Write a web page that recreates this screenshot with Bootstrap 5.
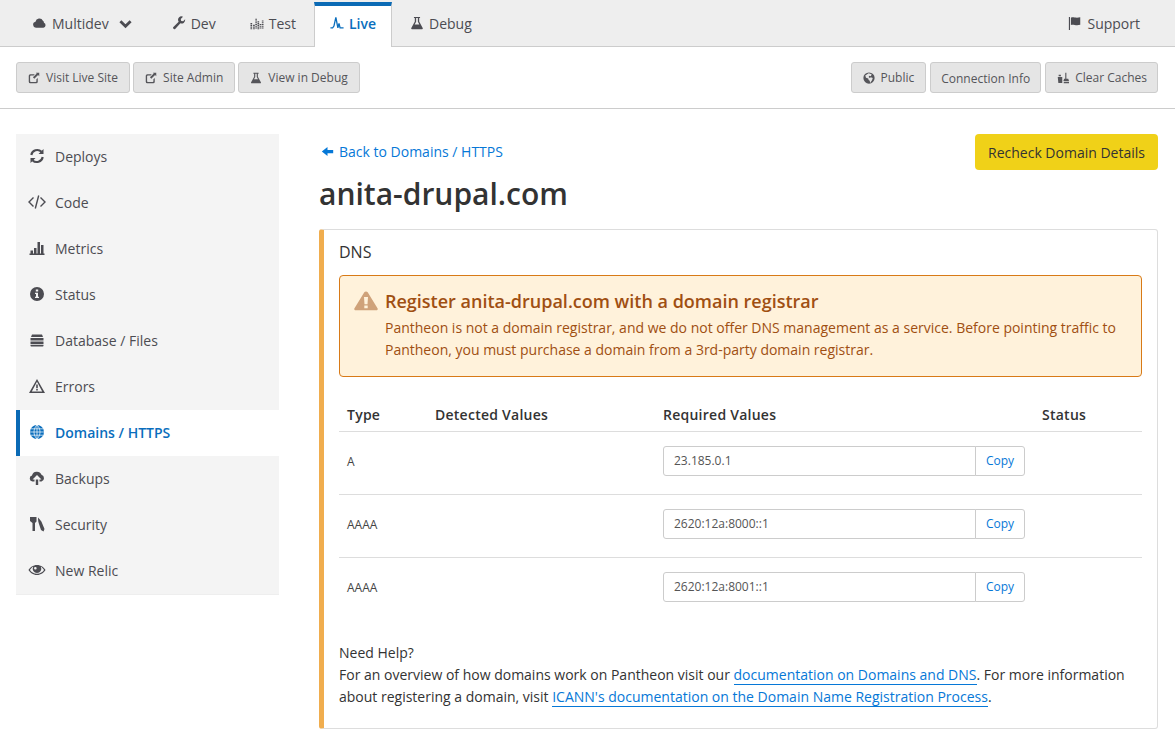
<!DOCTYPE html>
<html lang="en">
<head>
    <meta charset="UTF-8">
    <title>anita-drupal.com - Domains / HTTPS</title>
    <link href="https://cdn.jsdelivr.net/npm/bootstrap@5.3.2/dist/css/bootstrap.min.css" rel="stylesheet">
    <style>
        body {
            font-family: "Open Sans", "Liberation Sans", sans-serif;
            font-size: 14px;
            color: #333;
            background: #fff;
        }
        .ico { width: 16px; height: 16px; fill: currentColor; flex: none; }
        a { color: #0678d7; text-decoration: none; }

        /* top tabs */
        .env-bar { background: #eee; height: 47px; border-bottom: 1px solid #ccc; padding: 2px 17px 0 16px; }
        .env-tab { display: flex; align-items: center; gap: 5px; height: 45px; padding: 0 16px 3px; margin-right: 2px; color: #4c4c52; }
        .env-tab .ico { width: 14px; height: 14px; }
        .env-tab .ico.cloud { width: 15px; }
        .env-tab.current { background: #fff; border: solid #ccc; border-width: 0 1px; border-top: 4px solid #0a6ab5; padding: 0 15px 7px; color: #0a6ebd; font-weight: 600; }
        .env-tab .ico.caret { width: 13px; height: 13px; margin: 0 6px 0 5px; }

        /* toolbar */
        .tool-bar { height: 62px; border-bottom: 1px solid #ccc; padding: 15px 17px 0 16px; }
        .tool-btn { display: flex; align-items: center; gap: 6px; height: 31px; padding: 0 11px; font-size: 12px; color: #55555a; background: #e5e5e5; border: 1px solid #ccc; border-radius: 3px; }
        .tool-btn .ico { width: 12px; height: 12px; }
        .tool-btn.plain { padding: 2px 10px 0; }
        .tool-btn.tight { padding-right: 10px; }
        .tool-left { gap: 3px; }
        .tool-right { gap: 4px; }

        /* side menu */
        .page-wrap { padding: 25px 17px 0 16px; gap: 40px; }
        .side-menu { width: 263px; flex: none; background: #f4f4f4; border-bottom: 1px solid #eee; border-radius: 0; align-self: flex-start; }
        .side-menu .list-group-item { display: flex; align-items: center; gap: 10px; height: 46px; margin-top: 0; padding: 0 0 2px 13px; background: transparent; border: 0; border-radius: 0; color: #4c4c52; font-size: 14px; }
        .side-menu .list-group-item.active { margin-top: 0; background: #fff; border: 0; border-left: 4px solid #0a6ab5; padding-left: 9px; color: #0a6ebd; font-weight: 600; }
        .side-menu .ico.wide { width: 18px; margin: 0 -1px 0 -1px; }

        /* main */
        .main-col { flex: 1; min-width: 0; }
        .back-link { gap: 5px; margin-left: 2px; padding-bottom: 2px; }
        .back-link .ico { width: 13px; height: 13px; }
        .recheck { width: 183px; height: 36px; padding: 0; background: #f0d118; border: 0; border-radius: 4px; color: #333; font-size: 14px; }
        .domain-title { font-size: 30px; font-weight: 600; line-height: 40px; margin: 4px 0 15px; color: #333; }
        .dns-panel { border: 1px solid #ddd; border-left: 5px solid #f0ad4e; border-radius: 3px; padding: 11px 15px 21px; height: 500px; }
        .dns-title { font-size: 16px; line-height: 22px; margin: 0 0 12px; font-weight: 400; }
        .reg-alert { display: flex; gap: 7px; margin: 0 0 27px; height: 102px; padding: 13px 14px 0; background: #fff2db; border: 1px solid #d87a17; border-radius: 4px; color: #a04f12; font-size: 14px; line-height: 22px; }
        .reg-alert .ico { width: 24px; height: 20px; margin-top: 2px; color: #cfa27a; }
        .reg-alert h5 { font-size: 18px; font-weight: 600; line-height: 24px; margin: 0 0 4px; color: #a04f12; }
        .dns-table { table-layout: fixed; width: 100%; margin-bottom: 22px; font-size: 12px; color: #333; }
        .dns-table th { font-size: 14px; font-weight: 600; letter-spacing: .25px; padding: 0 8px 5px; height: 27px; border-bottom: 1px solid #ddd; }
        .dns-table td { padding: 14px 8px 0; height: 63px; vertical-align: top; border-bottom: 1px solid #ddd; }
        .dns-table tr:last-child td { border-bottom: 0; }
        .dns-table td.rtype { padding-top: 21px; color: #444; }
        .val-group { width: 362px; }
        .val-group .form-control { height: 30px; padding: 0 10px; font-size: 12px; color: #555; border-color: #ccc; border-radius: 3px 0 0 3px; background: #fff; min-height: 0; }
        .val-group .btn { width: 50px; height: 30px; padding: 0; font-size: 12px; color: #0678d7; background: #fff; border: 1px solid #ccc; border-radius: 0 3px 3px 0; }
        .help-text { line-height: 22px; }
        .help-text a { border-bottom: 1px solid #0678d7; }
    </style>
</head>
<body>
    <svg class="d-none">
        <symbol id="i-cloud" viewBox="0 0 16 16"><path d="M4 13.500a3.500 3.500 0 0 1-.6-6.900A4.500 4.500 0 0 1 11.900 5.500a2.600 2.600 0 0 1 1.200 2.300A3 3 0 0 1 12.500 13.500z"/></symbol>
        <symbol id="i-chevron" viewBox="0 0 14 14"><path d="M1.500 4.500 7 10l5.500-5.500" fill="none" stroke="currentColor" stroke-width="3"/></symbol>
        <symbol id="i-wrench" viewBox="0 0 16 16"><path d="M15 4.500a4 4 0 0 1-5.400 3.900l-5.700 6.100a1.500 1.500 0 0 1-2.300-2l6-5.900A4 4 0 0 1 12.600.8L10 3.300l.5 2.300 2.300.5L15 3.600z"/></symbol>
        <symbol id="i-test" viewBox="0 0 16 16"><path d="M1.500 8v7M4.500 10v5M7 3v12M9.500 6v9M12 9v6M14.500 5v10" stroke="currentColor" stroke-width="1.900" stroke-dasharray="1.300 .7" fill="none"/></symbol>
        <symbol id="i-pulse" viewBox="0 0 16 16"><path d="M.5 13.500H3l1.500-2 2.200-10L9 13.500l1.300-5 1.200 5h4" fill="none" stroke="currentColor" stroke-width="1.500"/></symbol>
        <symbol id="i-flask" viewBox="0 0 16 16"><path fill-rule="evenodd" d="M4.500 1h7v1.400h-1v3.800l4 7.400a1 1 0 0 1-.9 1.400H2.400a1 1 0 0 1-.9-1.400l4-7.400V2.400h-1zM7 2.400v4.200L5.300 9.600h5.400L9 6.600V2.400z"/></symbol>
        <symbol id="i-flag" viewBox="0 0 16 16"><path d="M1 1h1.300v15H1zM3.300 2c3-1.400 5 1 10.700-.5v8.500c-5.500 1.500-7.700-1-10.700.4z"/></symbol>
        <symbol id="i-share" viewBox="0 0 16 16"><path d="M3 3h6L7.500 4.800H3.800a1 1 0 0 0-1 1v6.400a1 1 0 0 0 1 1h6.400a1 1 0 0 0 1-1V9.500L13 8v5a2 2 0 0 1-2 2H3a2 2 0 0 1-2-2V5a2 2 0 0 1 2-2z"/><path d="M10.500 1H15v4.500l-1.600-1.600-5 5-1.800-1.800 5-5z"/></symbol>
        <symbol id="i-world" viewBox="0 0 16 16"><path fill-rule="evenodd" d="M8 .5a7.500 7.500 0 1 1 0 15 7.500 7.500 0 0 1 0-15zM3 4.500l1 3 3 1 .5 2 1.500 1 .5 3 2.500-3.500 1-3-2.500-1-1.500 1-1.500-1.500 1-1.500 2 .5 1-2.500L7.500 1.500z"/></symbol>
        <symbol id="i-clean" viewBox="0 0 16 16"><path d="M1 6.500h6v8H1.800zM2.200 3.500h3v2.200h-3zM11 1h1.500v8H15l1 3H8.500l1-3H11zM9 13h7v2H9z"/></symbol>
        <symbol id="i-refresh" viewBox="0 0 16 16"><path d="M2.300 7A6 6 0 0 1 12.500 3.800M13.700 9A6 6 0 0 1 3.500 12.200" fill="none" stroke="currentColor" stroke-width="2.100"/><path d="M14.500 1v5h-5zM1.500 15v-5h5z"/></symbol>
        <symbol id="i-code" viewBox="0 0 18 16"><path d="M5.500 3.500 1 8l4.500 4.500M12.500 3.500 17 8l-4.500 4.500M10.700 1.500l-3.400 13" fill="none" stroke="currentColor" stroke-width="1.400"/></symbol>
        <symbol id="i-bars" viewBox="0 0 16 16"><path d="M.5 13.500h15V15H.5zM1.500 10.500h2.500v3H1.500zM5 8h2.500v5.500H5zM8.500 2h2.500v11.500H8.500zM12 5h2.500v8.500H12z"/></symbol>
        <symbol id="i-info" viewBox="0 0 16 16"><path fill-rule="evenodd" d="M8 1a7 7 0 1 1 0 14A7 7 0 0 1 8 1zM6.800 3.500v2h2.400v-2zM6 6.800V8h1v2.700H6V12h4v-1.300H9V6.800z"/></symbol>
        <symbol id="i-db" viewBox="0 0 16 16"><path d="M3 2.500h10l1 2.500H2zM1.500 6h13v2.500h-13zM1.500 9.500h13V12h-13zM1.500 12.800h13v1a.8.8 0 0 1-.8.8H2.300a.8.8 0 0 1-.8-.8z"/></symbol>
        <symbol id="i-warn" viewBox="0 0 16 16"><path fill-rule="evenodd" d="M8 1 16 15H0zM8 3.800 2.800 13.500h10.400zM7.200 6.500h1.600v3.800H7.200zM7.200 11h1.600v1.500H7.200z"/></symbol>
        <symbol id="i-globe" viewBox="0 0 16 16"><circle cx="8" cy="8" r="7"/><path d="M1 8h14M2 4.800h12M2 11.200h12M8 1v14M8 1c-4 3.500-4 10.500 0 14M8 1c4 3.500 4 10.500 0 14" fill="none" stroke="#fff" stroke-width=".7"/></symbol>
        <symbol id="i-backup" viewBox="0 0 16 16"><path d="M3.500 11.500a3 3 0 0 1-.5-5.900A5 5 0 0 1 12.500 4.800 3.500 3.500 0 0 1 12.500 11.500H10.500V9.500H12.500L8 5 3.500 9.500h2v2zM6.800 9.500h2.400V15H6.800z"/></symbol>
        <symbol id="i-keys" viewBox="0 0 16 16"><path d="M1 1h6.500v4.500L6 7v8H3.500V7L1 5zM9 1.500c0 3.500 .5 5 1 6.500l2 6 2.500 1.500L15.500 13 13 7c-.5-1.500-1.500-3-4-5.500z"/></symbol>
        <symbol id="i-eye" viewBox="0 0 18 16"><path fill-rule="evenodd" d="M9 3c4 0 7 2.600 8.500 5C16 10.400 13 13 9 13S2 10.400.5 8C2 5.600 5 3 9 3zM5.200 4.800C3.800 5.500 2.800 6.700 2 8c1.200 1.900 3.600 3.800 7 3.800S14.800 9.900 16 8c-.8-1.300-1.800-2.500-3.200-3.200a4.300 4.300 0 1 1-7.600 0zM7.300 5a1.300 1.300 0 1 0 .1 2.600A1.300 1.300 0 0 0 7.300 5z"/></symbol>
        <symbol id="i-back" viewBox="0 0 16 16"><path d="M8 2.500v3.500h7v4H8v3.500L1 8z"/></symbol>
        <symbol id="i-alert" viewBox="0 0 24 22" preserveAspectRatio="none"><path fill-rule="evenodd" d="M10.300 1.500a2 2 0 0 1 3.400 0l9.800 17.500a1.500 1.500 0 0 1-1.300 2.300H1.800A1.500 1.500 0 0 1 .5 19zM10 6.500l.5 8h3l.5-8zM10.300 16v3h3.400v-3z"/></symbol>
    </svg>

    <nav class="nav env-bar">
        <a class="env-tab" href="#"><svg class="ico cloud"><use href="#i-cloud"/></svg>Multidev<svg class="ico caret"><use href="#i-chevron"/></svg></a>
        <a class="env-tab" href="#"><svg class="ico"><use href="#i-wrench"/></svg>Dev</a>
        <a class="env-tab" href="#"><svg class="ico"><use href="#i-test"/></svg>Test</a>
        <a class="env-tab current" href="#"><svg class="ico"><use href="#i-pulse"/></svg>Live</a>
        <a class="env-tab" href="#"><svg class="ico"><use href="#i-flask"/></svg>Debug</a>
        <a class="env-tab ms-auto" href="#"><svg class="ico"><use href="#i-flag"/></svg>Support</a>
    </nav>

    <div class="tool-bar d-flex justify-content-between">
        <div class="d-flex tool-left">
            <a class="tool-btn" href="#"><svg class="ico"><use href="#i-share"/></svg>Visit Live Site</a>
            <a class="tool-btn" href="#"><svg class="ico"><use href="#i-share"/></svg>Site Admin</a>
            <a class="tool-btn" href="#"><svg class="ico"><use href="#i-flask"/></svg>View in Debug</a>
        </div>
        <div class="d-flex tool-right">
            <a class="tool-btn" href="#"><svg class="ico"><use href="#i-world"/></svg>Public</a>
            <a class="tool-btn plain" href="#">Connection Info</a>
            <a class="tool-btn tight" href="#"><svg class="ico"><use href="#i-clean"/></svg>Clear Caches</a>
        </div>
    </div>

    <div class="page-wrap d-flex">
        <div class="list-group side-menu">
            <a class="list-group-item" href="#"><svg class="ico"><use href="#i-refresh"/></svg>Deploys</a>
            <a class="list-group-item" href="#"><svg class="ico wide"><use href="#i-code"/></svg>Code</a>
            <a class="list-group-item" href="#"><svg class="ico"><use href="#i-bars"/></svg>Metrics</a>
            <a class="list-group-item" href="#"><svg class="ico"><use href="#i-info"/></svg>Status</a>
            <a class="list-group-item" href="#"><svg class="ico"><use href="#i-db"/></svg>Database / Files</a>
            <a class="list-group-item" href="#"><svg class="ico"><use href="#i-warn"/></svg>Errors</a>
            <a class="list-group-item active" href="#"><svg class="ico"><use href="#i-globe"/></svg>Domains / HTTPS</a>
            <a class="list-group-item" href="#"><svg class="ico"><use href="#i-backup"/></svg>Backups</a>
            <a class="list-group-item" href="#"><svg class="ico"><use href="#i-keys"/></svg>Security</a>
            <a class="list-group-item" href="#"><svg class="ico wide"><use href="#i-eye"/></svg>New Relic</a>
        </div>

        <div class="main-col">
            <div class="d-flex justify-content-between align-items-center">
                <a class="back-link d-flex align-items-center" href="#"><svg class="ico"><use href="#i-back"/></svg>Back to Domains / HTTPS</a>
                <button class="btn recheck" type="button">Recheck Domain Details</button>
            </div>
            <h1 class="domain-title">anita-drupal.com</h1>

            <div class="dns-panel">
                <h4 class="dns-title">DNS</h4>
                <div class="alert reg-alert" role="alert">
                    <svg class="ico"><use href="#i-alert"/></svg>
                    <div>
                        <h5>Register anita-drupal.com with a domain registrar</h5>
                        Pantheon is not a domain registrar, and we do not offer DNS management as a service. Before pointing traffic to Pantheon, you must purchase a domain from a 3rd-party domain registrar.
                    </div>
                </div>

                <table class="dns-table">
                    <colgroup><col style="width:88px"><col style="width:228px"><col style="width:379px"><col></colgroup>
                    <thead>
                        <tr><th>Type</th><th>Detected Values</th><th>Required Values</th><th>Status</th></tr>
                    </thead>
                    <tbody>
                        <tr>
                            <td class="rtype">A</td><td></td>
                            <td><div class="input-group val-group"><input class="form-control" type="text" value="23.185.0.1" readonly><button class="btn" type="button">Copy</button></div></td>
                            <td></td>
                        </tr>
                        <tr>
                            <td class="rtype">AAAA</td><td></td>
                            <td><div class="input-group val-group"><input class="form-control" type="text" value="2620:12a:8000::1" readonly><button class="btn" type="button">Copy</button></div></td>
                            <td></td>
                        </tr>
                        <tr>
                            <td class="rtype">AAAA</td><td></td>
                            <td><div class="input-group val-group"><input class="form-control" type="text" value="2620:12a:8001::1" readonly><button class="btn" type="button">Copy</button></div></td>
                            <td></td>
                        </tr>
                    </tbody>
                </table>

                <div class="help-text">
                    <div>Need Help?</div>
                    For an overview of how domains work on Pantheon visit our <a href="#">documentation on Domains and DNS</a>. For more information about registering a domain, visit <a href="#">ICANN's documentation on the Domain Name Registration Process</a>.
                </div>
            </div>
        </div>
    </div>
</body>
</html>
